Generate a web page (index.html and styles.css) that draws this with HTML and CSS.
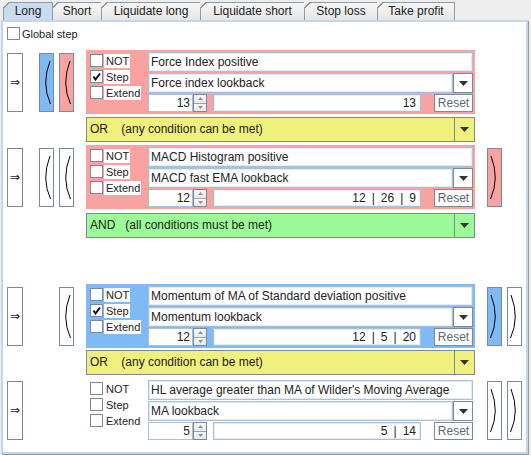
FILE: index.html
```html
<!DOCTYPE html>
<html>
<head>
<meta charset="utf-8">
<link rel="stylesheet" href="styles.css">
</head>
<body>
<div class="tabs">
  <div class="tab sel w-long">Long</div>
  <div class="tab w-short">Short</div>
  <div class="tab w-ll">Liquidate long</div>
  <div class="tab w-ls">Liquidate short</div>
  <div class="tab w-sl">Stop loss</div>
  <div class="tab w-tp">Take profit</div>
</div>
<div class="panel">
  <div class="global"><span class="cb"></span><span class="glabel">Global step</span></div>

  <!-- Row 1 -->
  <div class="row">
    <div class="arrow">⇒</div>
    <div class="slot paren blue"><svg viewBox="0 0 13 57"><path d="M10 7 Q1.2 29.5 10.5 50"/></svg></div>
    <div class="slot paren pink"><svg viewBox="0 0 13 57"><path d="M10 7 Q1.2 29.5 10.5 50"/></svg></div>
    <div class="group pinkbg">
      <div class="checks">
        <div class="cbrow"><span class="cb"></span><span class="lbl">NOT</span></div>
        <div class="cbrow"><span class="cb"><svg viewBox="0 0 11 11"><path d="M2.5 5.5 L4.5 8.5 L9 2.5"/></svg></span><span class="lbl">Step</span></div>
        <div class="cbrow"><span class="cb"></span><span class="lbl">Extend</span></div>
      </div>
      <div class="fields">
        <div class="tf">Force Index positive</div>
        <div class="combo"><div class="combo-text">Force index lookback</div><div class="combo-btn"><svg viewBox="0 0 9 5"><polygon points="0,0 9,0 4.5,5"/></svg></div></div>
        <div class="spin-row">
          <div class="spin-field">13</div>
          <div class="spin-btns"><div class="sb"><svg viewBox="0 0 5 3"><polygon points="0,3 5,3 2.5,0"/></svg></div><div class="sb"><svg viewBox="0 0 5 3"><polygon points="0,0 5,0 2.5,3"/></svg></div></div>
          <div class="value">13</div>
          <div class="reset">Reset</div>
        </div>
      </div>
    </div>
    <div class="slot rslot"></div>
    <div class="slot"></div>
  </div>
  <div class="logic yellow"><div class="logic-text">OR    (any condition can be met)</div><div class="logic-btn"><svg viewBox="0 0 9 5"><polygon points="0,0 9,0 4.5,5"/></svg></div></div>

  <!-- Row 2 -->
  <div class="row">
    <div class="arrow">⇒</div>
    <div class="slot paren"><svg viewBox="0 0 13 57"><path d="M10 7 Q1.2 29.5 10.5 50"/></svg></div>
    <div class="slot paren"><svg viewBox="0 0 13 57"><path d="M10 7 Q1.2 29.5 10.5 50"/></svg></div>
    <div class="group pinkbg">
      <div class="checks">
        <div class="cbrow"><span class="cb"></span><span class="lbl">NOT</span></div>
        <div class="cbrow"><span class="cb"></span><span class="lbl">Step</span></div>
        <div class="cbrow"><span class="cb"></span><span class="lbl">Extend</span></div>
      </div>
      <div class="fields">
        <div class="tf">MACD Histogram positive</div>
        <div class="combo"><div class="combo-text">MACD fast EMA lookback</div><div class="combo-btn"><svg viewBox="0 0 9 5"><polygon points="0,0 9,0 4.5,5"/></svg></div></div>
        <div class="spin-row">
          <div class="spin-field">12</div>
          <div class="spin-btns"><div class="sb"><svg viewBox="0 0 5 3"><polygon points="0,3 5,3 2.5,0"/></svg></div><div class="sb"><svg viewBox="0 0 5 3"><polygon points="0,0 5,0 2.5,3"/></svg></div></div>
          <div class="value">12<span class="sep">|</span>26<span class="sep">|</span>9</div>
          <div class="reset">Reset</div>
        </div>
      </div>
    </div>
    <div class="slot paren pink rslot"><svg viewBox="0 0 13 57"><path d="M3 7 Q11.8 29.5 2.5 50"/></svg></div>
    <div class="slot"></div>
  </div>
  <div class="logic green"><div class="logic-text">AND   (all conditions must be met)</div><div class="logic-btn"><svg viewBox="0 0 9 5"><polygon points="0,0 9,0 4.5,5"/></svg></div></div>

  <!-- Row 3 -->
  <div class="row gapbefore">
    <div class="arrow">⇒</div>
    <div class="slot"></div>
    <div class="slot paren"><svg viewBox="0 0 13 57"><path d="M10 7 Q1.2 29.5 10.5 50"/></svg></div>
    <div class="group bluebg">
      <div class="checks">
        <div class="cbrow"><span class="cb"></span><span class="lbl">NOT</span></div>
        <div class="cbrow"><span class="cb"><svg viewBox="0 0 11 11"><path d="M2.5 5.5 L4.5 8.5 L9 2.5"/></svg></span><span class="lbl">Step</span></div>
        <div class="cbrow"><span class="cb"></span><span class="lbl">Extend</span></div>
      </div>
      <div class="fields">
        <div class="tf">Momentum of MA of Standard deviation positive</div>
        <div class="combo"><div class="combo-text">Momentum lookback</div><div class="combo-btn"><svg viewBox="0 0 9 5"><polygon points="0,0 9,0 4.5,5"/></svg></div></div>
        <div class="spin-row">
          <div class="spin-field">12</div>
          <div class="spin-btns"><div class="sb"><svg viewBox="0 0 5 3"><polygon points="0,3 5,3 2.5,0"/></svg></div><div class="sb"><svg viewBox="0 0 5 3"><polygon points="0,0 5,0 2.5,3"/></svg></div></div>
          <div class="value">12<span class="sep">|</span>5<span class="sep">|</span>20</div>
          <div class="reset">Reset</div>
        </div>
      </div>
    </div>
    <div class="slot paren blue rslot"><svg viewBox="0 0 13 57"><path d="M3 7 Q11.8 29.5 2.5 50"/></svg></div>
    <div class="slot paren"><svg viewBox="0 0 13 57"><path d="M3 7 Q11.8 29.5 2.5 50"/></svg></div>
  </div>
  <div class="logic yellow tight"><div class="logic-text">OR    (any condition can be met)</div><div class="logic-btn"><svg viewBox="0 0 9 5"><polygon points="0,0 9,0 4.5,5"/></svg></div></div>

  <!-- Row 4 -->
  <div class="row">
    <div class="arrow">⇒</div>
    <div class="slot"></div>
    <div class="slot"></div>
    <div class="group">
      <div class="checks">
        <div class="cbrow"><span class="cb"></span><span class="lbl">NOT</span></div>
        <div class="cbrow"><span class="cb"></span><span class="lbl">Step</span></div>
        <div class="cbrow"><span class="cb"></span><span class="lbl">Extend</span></div>
      </div>
      <div class="fields">
        <div class="tf">HL average greater than MA of Wilder's Moving Average</div>
        <div class="combo"><div class="combo-text">MA lookback</div><div class="combo-btn"><svg viewBox="0 0 9 5"><polygon points="0,0 9,0 4.5,5"/></svg></div></div>
        <div class="spin-row">
          <div class="spin-field">5</div>
          <div class="spin-btns"><div class="sb"><svg viewBox="0 0 5 3"><polygon points="0,3 5,3 2.5,0"/></svg></div><div class="sb"><svg viewBox="0 0 5 3"><polygon points="0,0 5,0 2.5,3"/></svg></div></div>
          <div class="value">5<span class="sep">|</span>14</div>
          <div class="reset">Reset</div>
        </div>
      </div>
    </div>
    <div class="slot paren rslot"><svg viewBox="0 0 13 57"><path d="M3 7 Q11.8 29.5 2.5 50"/></svg></div>
    <div class="slot paren"><svg viewBox="0 0 13 57"><path d="M3 7 Q11.8 29.5 2.5 50"/></svg></div>
  </div>
</div>
</body>
</html>
```

FILE: styles.css
```css
html, body {
  margin: 0;
  padding: 0;
}
body {
  width: 531px;
  height: 455px;
  overflow: hidden;
  background: #eeeeee;
  font-family: "Liberation Sans", Arial, sans-serif;
  font-size: 12px;
  color: #222;
}

/* Tabs */
.tabs {
  display: flex;
  padding: 2px 0 0 3px;
  height: 18px;
}
.tab {
  position: relative;
  box-sizing: border-box;
  height: 18px;
  border: 1px solid #8e9aa6;
  border-bottom: none;
  margin-right: -1px;
  background: linear-gradient(#f6f6f6, #e6e6e6);
  text-align: center;
  line-height: 17px;
  font-size: 12px;
  color: #222;
}
.tab::before {
  content: "";
  position: absolute;
  left: -1px;
  top: -1px;
  width: 6px;
  height: 6px;
  background: linear-gradient(to bottom right, #eeeeee 0 44%, #8e9aa6 44% 60%, transparent 60%);
}
.tab.sel {
  background: #c8dbef;
  z-index: 1;
}
.w-long { width: 50px; }
.w-short { width: 50px; }
.w-ll { width: 100px; }
.w-ls { width: 105px; }
.w-sl { width: 74px; }
.w-tp { width: 78px; }

/* Content panel */
.panel {
  box-sizing: border-box;
  margin-left: 1px;
  width: 527px;
  height: 434px;
  border: 2px solid #c3d6ec;
  background: #fff;
  box-shadow: 1px 1px 0 #8a99a8;
}

.global {
  display: flex;
  align-items: center;
  height: 13px;
  margin: 5px 0 10px 4px;
}
.glabel {
  font-size: 11px;
  margin-left: 2px;
}

/* Checkbox */
.cb {
  display: inline-block;
  box-sizing: border-box;
  width: 13px;
  height: 13px;
  border: 1px solid #7a8a99;
  background: #fff;
  flex: none;
}
.cb svg {
  display: block;
  width: 11px;
  height: 11px;
}
.cb path {
  fill: none;
  stroke: #111;
  stroke-width: 2;
}

/* Rows */
.row {
  display: flex;
  align-items: center;
  height: 64px;
  margin-top: 3px;
  padding-left: 4px;
}
.row.gapbefore { margin-top: 46px; }
.arrow {
  box-sizing: border-box;
  width: 16px;
  height: 59px;
  border: 1px solid #7a8a99;
  background: #fff;
  font-family: "DejaVu Sans", sans-serif;
  font-size: 12px;
  display: flex;
  align-items: center;
  justify-content: center;
  margin-right: 16px;
  color: #222;
}
.slot {
  box-sizing: border-box;
  width: 15px;
  height: 59px;
  flex: none;
}
.slot + .slot { margin-left: 5px; }
.paren {
  border: 1px solid #7a8a99;
  background: #fff;
}
.paren svg {
  display: block;
  width: 13px;
  height: 57px;
}
.paren path {
  fill: none;
  stroke: #000;
  stroke-width: 1;
}
.paren.blue { background: #7fbaf6; }
.paren.pink { background: #f8a2a2; }
.rslot { margin-left: 12px; }

/* Condition group */
.group {
  box-sizing: border-box;
  width: 389px;
  height: 64px;
  margin-left: 12px;
  padding: 2px 2px 2px 4px;
  display: flex;
  flex: none;
}
.pinkbg { background: #f8a2a2; }
.bluebg { background: #7fbaf6; }
.checks {
  width: 58px;
  padding-top: 2px;
  flex: none;
}
.cbrow {
  display: flex;
  align-items: center;
  height: 13px;
  margin-bottom: 3px;
}
.lbl {
  background: #fff;
  font-size: 11px;
  line-height: 14px;
  height: 14px;
  padding: 0 1px 0 2px;
  margin-left: 1px;
}
.fields {
  width: 325px;
  flex: none;
}
.tf {
  box-sizing: border-box;
  height: 20px;
  border: 1px solid #a9c0d9;
  box-shadow: inset 0 0 0 1px #e3ecf6;
  background: #fff;
  padding-left: 2px;
  line-height: 18px;
  white-space: nowrap;
  overflow: hidden;
}
.combo {
  display: flex;
  height: 20px;
  margin-top: 1px;
}
.combo-text {
  box-sizing: border-box;
  flex: 1;
  border: 1px solid #a9c0d9;
  box-shadow: inset 0 0 0 1px #e3ecf6;
  background: #fff;
  padding-left: 2px;
  line-height: 18px;
}
.combo-btn {
  box-sizing: border-box;
  width: 20px;
  border: 1px solid #7a8a99;
  background: #fff;
  display: flex;
  align-items: center;
  justify-content: center;
}
.combo-btn svg, .logic-btn svg {
  width: 9px;
  height: 5px;
  fill: #333;
}
.spin-row {
  display: flex;
  height: 18px;
  margin-top: 1px;
}
.spin-field {
  box-sizing: border-box;
  width: 45px;
  border: 1px solid #a9c0d9;
  background: #fff;
  text-align: right;
  padding-right: 2px;
  line-height: 16px;
}
.spin-btns {
  box-sizing: border-box;
  width: 14px;
  border: 1px solid #7a8a99;
  display: flex;
  flex-direction: column;
}
.sb {
  flex: 1;
  background: linear-gradient(#fafafa, #e6e6e6);
  display: flex;
  align-items: center;
  justify-content: center;
}
.sb + .sb { border-top: 1px solid #9aa6b2; }
.sb svg {
  width: 5px;
  height: 3px;
  fill: #8a939c;
}
.value {
  box-sizing: border-box;
  width: 208px;
  margin-left: 6px;
  border: 1px solid #a9c0d9;
  box-shadow: inset 0 0 0 1px #e3ecf6;
  background: #fff;
  text-align: right;
  padding-right: 4px;
  line-height: 16px;
}
.sep { margin: 0 6px; }
.reset {
  box-sizing: border-box;
  width: 39px;
  margin-left: 13px;
  border: 1px solid #7a8a99;
  background: #fff;
  color: #5d6873;
  text-align: center;
  line-height: 16px;
}

/* Logic combo */
.logic {
  box-sizing: border-box;
  display: flex;
  width: 389px;
  height: 25px;
  margin: 3px 0 0 83px;
  border: 1px solid #7a8a99;
}
.logic.tight { margin-top: 2px; }
.logic.green { margin-top: 4px; }
.yellow { background: #f0f07c; }
.green { background: #9cfb98; }
.logic-text {
  flex: 1;
  padding-left: 3px;
  line-height: 23px;
  white-space: pre;
  font-size: 12px;
}
.logic-btn {
  width: 19px;
  border-left: 1px solid #7a8a99;
  display: flex;
  align-items: center;
  justify-content: center;
}
```
